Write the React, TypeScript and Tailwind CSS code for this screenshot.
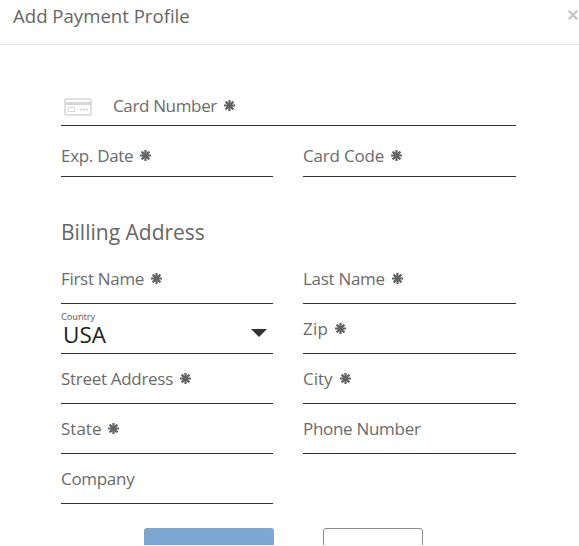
import React from 'react';

const RequiredMark: React.FC = () => (
  <svg viewBox="0 0 11 11" className="w-[11px] h-[11px] ml-[7px] mb-[2px] shrink-0" fill="none" stroke="#636363" strokeWidth="2">
    <path d="M5.5 0v11M0 5.5h11" strokeWidth="2.2" />
    <path d="m1.6 1.6 7.8 7.8M9.4 1.6 1.6 9.4" strokeWidth="2.2" />
    <circle cx="5.5" cy="5.5" r="2.6" fill="#636363" stroke="none" />
  </svg>
);

const CardIcon: React.FC = () => (
  <svg viewBox="0 0 28 18" className="w-[28px] h-[18px]" fill="none" stroke="#d6d6d6">
    <rect x="1" y="1" width="26" height="16" rx="1.5" strokeWidth="1.6" />
    <path d="M1 5.5h26" strokeWidth="3" />
    <rect x="4.5" y="9.5" width="6" height="4" />
    <path d="M16 11.5h9" strokeWidth="2" strokeDasharray="2 1" />
  </svg>
);

interface FieldProps {
  label: string;
  required?: boolean;
  className?: string;
}

const Field: React.FC<FieldProps> = ({ label, required = false, className = 'pt-[13px] tracking-[-0.3px]' }) => (
  <div className={`h-[50px] border-b border-[#333] flex items-start ${className}`}>
    <label className="flex items-center h-6 text-[17px] leading-6 text-[#6b6b6b] whitespace-nowrap">
      {label}
      {required && <RequiredMark />}
    </label>
  </div>
);

const CountrySelect: React.FC = () => (
  <div className="h-[50px] border-b border-[#333] flex justify-between">
    <div className="flex flex-col">
      <span className="mt-[7px] h-[13px] text-[9.2px] leading-[12px] text-[#555]">Country</span>
      <span className="pl-[2px] text-[22.5px] leading-[22px] text-[#222]">USA</span>
    </div>
    <svg viewBox="0 0 16 8" className="w-4 h-2 mt-[25px] mr-[6px]" fill="#333">
      <path d="M0 0h16L8 8z" />
    </svg>
  </div>
);

export default function App() {
  return (
    <div className="w-full h-[545px] overflow-hidden bg-white font-['Open_Sans',sans-serif]">
      <header className="h-[45px] border-b border-[#e5e5e5] flex justify-between pl-[13px] pr-[1px]">
        <h1 className="text-[18.6px] leading-[31px] text-[#666]">Add Payment Profile</h1>
        <button className="h-[29px] flex items-center" aria-label="Close">
          <svg viewBox="0 0 10 10" className="w-[10px] h-[10px]" stroke="#c4c4c4" strokeWidth="2.2">
            <path d="m.7.7 8.6 8.6M9.3.7.7 9.3" />
          </svg>
        </button>
      </header>

      <main className="ml-[61px] w-[455px] pt-[31px]">
        <div className="h-[50px] border-b border-[#333] flex items-start">
          <div className="mt-[22px] ml-[3px] mr-[21px]">
            <CardIcon />
          </div>
          <label className="mt-[18px] flex items-center h-6 text-[17px] tracking-[-0.35px] leading-6 text-[#6b6b6b] whitespace-nowrap">
            Card Number
            <RequiredMark />
          </label>
        </div>
        <div className="grid grid-cols-[212px_213px] gap-x-[30px] pt-[1px]">
          <Field label="Exp. Date" required className="pt-[17px] tracking-[-0.3px]" />
          <Field label="Card Code" required className="pt-[17px] tracking-[-0.2px]" />
        </div>

        <h2 className="mt-[40px] h-[37px] text-[21px] leading-[30px] text-[#666]">Billing Address</h2>
        <div className="grid grid-cols-[212px_213px] gap-x-[30px]">
          <Field label="First Name" required />
          <Field label="Last Name" required />
          <CountrySelect />
          <Field label="Zip" required className="pt-[13px] tracking-[0.3px]" />
          <Field label="Street Address" required />
          <Field label="City" required className="pt-[13px]" />
          <Field label="State" required className="pt-[13px]" />
          <Field label="Phone Number" />
          <Field label="Company" />
        </div>

        <div className="mt-[24px] ml-[83px] flex gap-[49px]">
          <button className="w-[130px] h-10 rounded-[3px] bg-[#7ba7d1]" aria-label="Save" />
          <button className="w-[100px] h-10 rounded-[3px] border border-[#8c8c8c] bg-white" aria-label="Cancel" />
        </div>
      </main>
    </div>
  );
}
